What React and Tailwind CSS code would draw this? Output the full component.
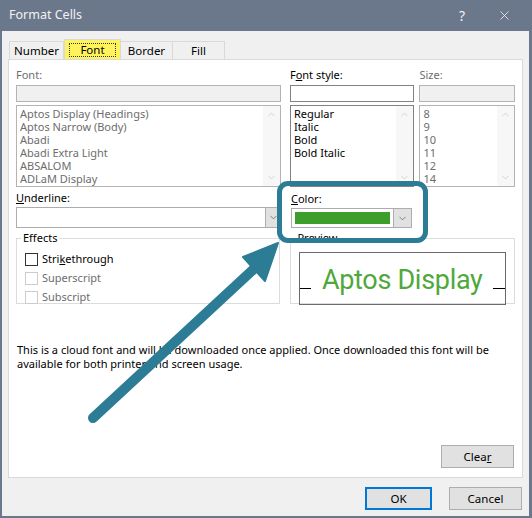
import { ChevronUp, ChevronDown, X } from 'lucide-react';

const fontNames = ['Aptos Display (Headings)', 'Aptos Narrow (Body)', 'Abadi', 'Abadi Extra Light', 'ABSALOM', 'ADLaM Display'];
const styles = ['Regular', 'Italic', 'Bold', 'Bold Italic'];
const sizes = ['8', '9', '10', '11', '12', '14'];

const ListBox = ({ items, disabled }) => (
  <div className={`relative h-[82px] border ${disabled ? 'border-[#b4b4b4]' : 'border-[#828282]'} bg-white overflow-hidden`}>
    <div className={`pl-[3px] pt-[1px] leading-[13px] ${disabled ? 'text-[#6d6d6d]' : 'text-black'}`}>
      {items.map((it) => (
        <div key={it}>{it}</div>
      ))}
    </div>
    <div className="absolute right-0 top-0 bottom-0 w-[17px] bg-[#f7f7f7] flex flex-col justify-between items-center py-[3px]">
      <ChevronUp size={11} strokeWidth={1.5} className="text-[#c2c2c2]" />
      <ChevronDown size={11} strokeWidth={1.5} className="text-[#c2c2c2]" />
    </div>
  </div>
);

const Check = ({ label, disabled, children }) => (
  <div className="flex items-center h-[19px]">
    <span className={`w-[13px] h-[13px] border ${disabled ? 'border-[#cccccc]' : 'border-[#333333]'} bg-white mr-[4px]`} />
    <span className={disabled ? 'text-[#6d6d6d]' : 'text-black'}>{children || label}</span>
  </div>
);

export default function App() {
  return (
    <div className="relative w-[532px] h-[518px] bg-[#6b788b] flex flex-col pl-[2px] pr-[3px] pb-[2px] overflow-hidden text-[11px] text-black" style={{ fontFamily: '"Noto Sans", "Liberation Sans", sans-serif' }}>
      {/* title bar */}
      <div className="h-[31px] flex items-center text-[#f2f2f2] text-[12.5px] shrink-0">
        <span className="ml-[7px]">Format Cells</span>
        <span className="ml-auto mr-[32px] text-[14px]">?</span>
        <X size={15} strokeWidth={1.3} className="mr-[17px]" />
      </div>

      <div className="flex-1 bg-[#f0f0f0] px-[6px] pt-[9px] flex flex-col">
        {/* tabs */}
        <div className="flex h-[19px] text-[11.5px] pl-[1px]">
          <div className="w-[55px] border border-b-0 border-[#d9d9d9] bg-[#f0f0f0] flex items-center justify-center mt-[1px]">Number</div>
          <div className="w-[57px] bg-[#fff35c] border border-b-0 border-[#d9d9d9] flex items-center justify-center -mt-[1px]">
            <span className="border border-dotted border-[#333] px-[10px] leading-[12px]">Font</span>
          </div>
          <div className="w-[52px] border border-b-0 border-l-0 border-[#d9d9d9] flex items-center justify-center mt-[1px]">Border</div>
          <div className="w-[52px] border border-b-0 border-l-0 border-[#d9d9d9] flex items-center justify-center mt-[1px]">Fill</div>
        </div>

        {/* panel */}
        <div className="h-[419px] bg-white border border-[#d9d9d9] px-[7px] flex flex-col">
          <div className="flex">
            <div className="w-[266px] flex flex-col">
              <div className="h-[16px] mt-[9px] leading-[12px] text-[#6d6d6d]">Font:</div>
              <div className="h-[17px] border border-[#b4b4b4] bg-[#f0f0f0]" />
              <div className="mt-[3px]"><ListBox items={fontNames} disabled /></div>
            </div>
            <div className="w-[125px] ml-[9px] flex flex-col">
              <div className="h-[16px] mt-[9px] leading-[12px]">F<span className="underline">o</span>nt style:</div>
              <div className="h-[17px] border border-[#828282] bg-white" />
              <div className="mt-[3px]"><ListBox items={styles} /></div>
            </div>
            <div className="w-[96px] ml-[5px] flex flex-col">
              <div className="h-[16px] mt-[9px] leading-[12px] text-[#6d6d6d]">Size:</div>
              <div className="h-[17px] border border-[#b4b4b4] bg-[#f0f0f0]" />
              <div className="mt-[3px]"><ListBox items={sizes} disabled /></div>
            </div>
          </div>

          <div className="flex mt-[3px]">
            <div className="w-[266px] flex flex-col">
              <div className="h-[17px]"><span className="underline">U</span>nderline:</div>
              <div className="h-[21px] border border-[#adadad] bg-white flex justify-end">
                <div className="w-[16px] bg-[#e1e1e1] border-l border-[#adadad] flex items-center justify-center">
                  <ChevronDown size={11} strokeWidth={1.5} className="text-[#555]" />
                </div>
              </div>
            </div>
            <div className="w-[121px] ml-[9px] flex flex-col">
              <div className="h-[17px] mt-[1px]"><span className="underline">C</span>olor:</div>
              <div className="h-[20px] border border-[#adadad] bg-white flex">
                <div className="flex-1 m-[3px] bg-[#3c9e2b]" />
                <div className="w-[18px] bg-[#e1e1e1] border-l border-[#adadad] flex items-center justify-center">
                  <ChevronDown size={11} strokeWidth={1.5} className="text-[#555]" />
                </div>
              </div>
            </div>
          </div>

          <div className="flex mt-[2px]">
            <fieldset className="w-[265px] h-[74px] border border-[#dcdcdc] pl-[8px] pt-[3px]">
              <legend className="px-[2px] -ml-[4px]">Effects</legend>
              <Check>Stri<span className="underline">k</span>ethrough</Check>
              <Check label="Superscript" disabled />
              <Check label="Subscript" disabled />
            </fieldset>
            <fieldset className="w-[225px] h-[74px] ml-[10px] border border-[#dcdcdc] px-[8px]">
              <legend className="px-[2px] -ml-[4px]">Preview</legend>
              <div className="h-[53px] mt-[5px] border border-[#6a6a6a] flex items-end pb-[15px]">
                <div className="w-[11px] h-[1px] bg-black" />
                <div className="flex-1 text-center text-[27px] leading-[30px] -mb-[6px] text-[#4fa83a] tracking-[-0.3px]" style={{ fontFamily: 'Roboto, "Liberation Sans", sans-serif' }}>Aptos Display</div>
                <div className="w-[12px] h-[1px] bg-black" />
              </div>
            </fieldset>
          </div>

          <p className="mt-[39px] leading-[14px] pl-[1px]">
            This is a cloud font and will be downloaded once applied. Once downloaded this font will be available for both printer and screen usage.
          </p>

          <div className="flex justify-end mt-auto mb-[9px]">
            <button className="w-[73px] h-[23px] bg-[#e1e1e1] border border-[#adadad] mr-[1px] text-[11.5px]">
              Clea<span className="underline">r</span>
            </button>
          </div>
        </div>

        {/* footer */}
        <div className="flex justify-end mt-[9px] pr-[1px] text-[11.5px]">
          <button className="w-[67px] h-[23px] bg-[#e1e1e1] border-2 border-[#0078d7]">OK</button>
          <button className="w-[73px] h-[23px] ml-[17px] bg-[#e1e1e1] border border-[#adadad]">Cancel</button>
        </div>
      </div>

      {/* callout overlay */}
      <div className="absolute left-[277px] top-[181px] w-[151px] h-[62px] border-[5px] border-[#2d7c96] rounded-[11px] pointer-events-none" />
      <svg className="absolute left-0 top-0 pointer-events-none" width="532" height="518" viewBox="0 0 532 518">
        <line x1="93" y1="418" x2="256" y2="267" stroke="#2d7c96" strokeWidth="10" strokeLinecap="round" />
        <polygon points="278,243 243,257 265,281" fill="#2d7c96" stroke="#2d7c96" strokeWidth="2" strokeLinejoin="round" />
      </svg>
    </div>
  );
}
